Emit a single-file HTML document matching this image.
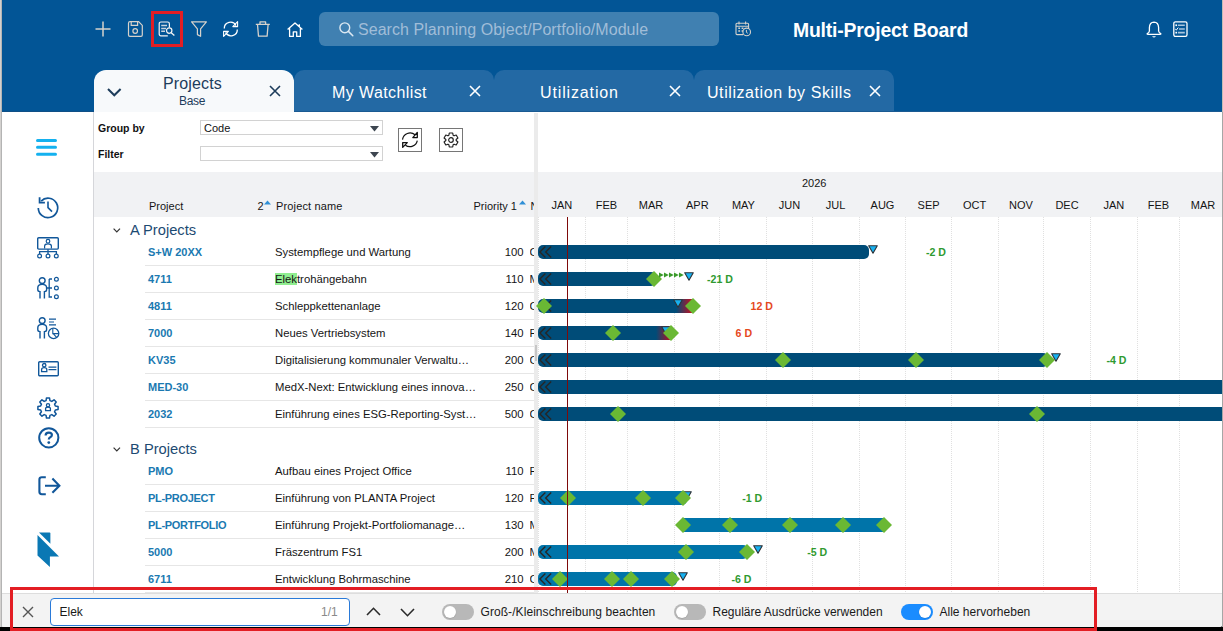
<!DOCTYPE html><html><head><meta charset="utf-8"><style>
*{box-sizing:border-box}
html,body{margin:0;padding:0}
body{width:1223px;height:631px;overflow:hidden;background:#000;font-family:"Liberation Sans", sans-serif;position:relative}
.a{position:absolute}
.t{position:absolute;white-space:nowrap;line-height:1}
svg{position:absolute;overflow:visible}
</style></head><body>
<div class="a" style="left:0;top:0;width:1223px;height:627px;background:#fff;border-radius:0 0 4px 4px;overflow:hidden">
<div class="a" style="left:0;top:0;width:1223px;height:112px;background:#025596"></div>
<div class="a" style="left:0;top:111px;width:1223px;height:1px;background:#0f4f86"></div>
<svg style="left:95px;top:21px" width="16" height="16" viewBox="0 0 16 16" ><path d="M8 0.5V15.5M0.5 8H15.5" stroke="#d6d2cc" stroke-width="1.5" fill="none"/></svg>
<svg style="left:127px;top:21px" width="16" height="16" viewBox="0 0 16 16" ><path d="M1.5 2.2Q1.5 0.7 3 0.7H11.6L15.3 4.4V14Q15.3 15.3 14 15.3H3Q1.5 15.3 1.5 14Z" stroke="#d6d2cc" stroke-width="1.2" fill="none"/><path d="M4.2 0.7V4.3H10.6V0.7" stroke="#d6d2cc" stroke-width="1.2" fill="none"/><circle cx="8.2" cy="10" r="2.3" stroke="#d6d2cc" stroke-width="1.2" fill="none"/></svg>
<div class="a" style="left:151px;top:11px;width:32px;height:36px;border:3px solid #e31e24"></div>
<svg style="left:158px;top:21px" width="18" height="16" viewBox="0 0 18 16" ><path d="M9.8 14.9H3Q1.2 14.9 1.2 13.1V2.8Q1.2 1 3 1H9.6Q11.4 1 11.4 2.8V6.4" stroke="#f4f4f4" stroke-width="1.2" fill="none"/><path d="M3.2 4.6H9M3.2 7.4H8M3.2 10.2H7" stroke="#c8d4de" stroke-width="1.5" fill="none"/><circle cx="11.2" cy="9.6" r="2.7" fill="#025596" stroke="#f4f4f4" stroke-width="1.2"/><path d="M13.2 11.8L16.4 14.6" stroke="#f4f4f4" stroke-width="1.3"/></svg>
<svg style="left:191px;top:21px" width="16" height="16" viewBox="0 0 16 16" ><path d="M0.6 0.8H15.4L9.6 7.9V15.3L6.4 13.6V7.9Z" stroke="#d6d2cc" stroke-width="1.2" fill="none" stroke-linejoin="round"/></svg>
<svg style="left:222px;top:21px" width="18" height="16" viewBox="0 0 18 16" ><path d="M2.3 7.6A6.2 6.2 0 0 1 14 4.6" stroke="#fff" stroke-width="1.3" fill="none"/><path d="M15.6 0.6V5.6H10.8Z" stroke="#fff" stroke-width="1.1" fill="none" stroke-linejoin="round"/><path d="M15.3 8.4A6.2 6.2 0 0 1 3.6 11.4" stroke="#fff" stroke-width="1.3" fill="none"/><path d="M1.6 15.4V10.4H6.4Z" stroke="#fff" stroke-width="1.1" fill="none" stroke-linejoin="round"/></svg>
<svg style="left:255px;top:21px" width="16" height="16" viewBox="0 0 16 16" ><path d="M0.8 3.3H14.8M5 3.1V0.9H10.6V3.1M2.5 3.5L3.5 15.2H12.1L13.1 3.5" stroke="#d6d2cc" stroke-width="1.3" fill="none" stroke-linejoin="round"/></svg>
<svg style="left:287px;top:22px" width="16" height="15" viewBox="0 0 16 15" ><path d="M0.6 7.6L8 0.9L15.4 7.6M2.6 6V14.4H6.3V9.8H9.7V14.4H13.4V6M12.3 2.2V4.6" stroke="#fff" stroke-width="1.3" fill="none" stroke-linejoin="round"/></svg>
<div class="a" style="left:319px;top:12px;width:400px;height:34px;border-radius:6px;background:#4080b1"></div>
<svg style="left:339px;top:22px" width="15" height="15" viewBox="0 0 15 15" ><circle cx="5.8" cy="5.8" r="4.9" stroke="#dce8f2" stroke-width="1.4" fill="none"/><path d="M9.4 9.4L13.8 13.8" stroke="#dce8f2" stroke-width="1.5" stroke-linecap="round"/></svg>
<div class="t" style="left:358px;top:22px;font-size:16px;color:#a0bdd8;letter-spacing:0.05px">Search Planning Object/Portfolio/Module</div>
<svg style="left:735px;top:21px" width="17" height="17" viewBox="0 0 17 17" ><path d="M8 13.6H2Q1 13.6 1 12.6V3.2Q1 2.2 2 2.2H12.6Q13.6 2.2 13.6 3.2V7.2M1 5.2H13.6M4 0.6V3.4M10.6 0.6V3.4" stroke="#d6d2cc" stroke-width="1.1" fill="none"/><path d="M3.3 7.3H5.1M6.6 7.3H8.4M3.3 10H5.1M6.6 10H8" stroke="#d6d2cc" stroke-width="1.4"/><circle cx="11.7" cy="10.9" r="3.8" fill="#025596" stroke="#d6d2cc" stroke-width="1.1"/><path d="M11.4 8.9V11.3L12.8 12.3" stroke="#d6d2cc" stroke-width="1" fill="none"/></svg>
<div class="t" style="left:793px;top:21px;font-size:19.4px;letter-spacing:-0.2px;font-weight:700;color:#fff">Multi-Project Board</div>
<svg style="left:1146px;top:21px" width="16" height="17" viewBox="0 0 16 17" ><path d="M8 1.2Q12.4 1.4 12.6 6.6V10Q12.8 11.6 14.8 12.6Q15 13.4 14.2 13.4H1.8Q1 13.4 1.2 12.6Q3.2 11.6 3.4 10V6.6Q3.6 1.4 8 1.2Z" stroke="#fff" stroke-width="1.3" fill="none" stroke-linejoin="round"/><path d="M6.6 15.4Q8 16.6 9.4 15.4" stroke="#fff" stroke-width="1.2" fill="none"/></svg>
<svg style="left:1173px;top:21px" width="15" height="16" viewBox="0 0 15 16" ><rect x="0.8" y="0.8" width="13.2" height="14.6" rx="1.6" stroke="#fff" stroke-width="1.3" fill="none"/><path d="M5 4.2H11.8M6 8H11.8M5 11.6H11.8" stroke="#a9c4dc" stroke-width="1.6"/><rect x="2.4" y="3.4" width="1.7" height="1.7" fill="#fff"/><rect x="2.4" y="10.8" width="1.7" height="1.7" fill="#fff"/><path d="M2.2 8L3.3 9.1L5.2 6.6" stroke="#fff" stroke-width="1" fill="none"/></svg>
<div class="a" style="left:94px;top:70px;width:200px;height:42px;background:#f7f9fb;border-radius:12px 12px 0 0"></div>
<svg style="left:107px;top:88px" width="15" height="9" viewBox="0 0 15 9" ><path d="M1 1L7.3 7.3L13.6 1" stroke="#1d3c5b" stroke-width="2" fill="none"/></svg>
<div class="t" style="left:163px;top:76px;font-size:16px;color:#1d3c5b;letter-spacing:0.15px">Projects</div>
<div class="t" style="left:179px;top:95px;font-size:12px;color:#1d3c5b;letter-spacing:-0.3px">Base</div>
<svg style="left:270.0px;top:86.0px" width="10" height="10" viewBox="0 0 10 10" ><path d="M0 0L10 10M10 0L0 10" stroke="#1d3c5b" stroke-width="1.6"/></svg>
<div class="a" style="left:294px;top:70px;width:200px;height:42px;background:#2369a4;border-radius:10px 10px 0 0"></div>
<div class="t" style="left:332px;top:85px;font-size:16px;color:#fff;letter-spacing:0.4px">My Watchlist</div>
<svg style="left:470.0px;top:86.0px" width="10" height="10" viewBox="0 0 10 10" ><path d="M0 0L10 10M10 0L0 10" stroke="#fff" stroke-width="1.6"/></svg>
<div class="a" style="left:494px;top:70px;width:200px;height:42px;background:#2369a4;border-radius:10px 10px 0 0"></div>
<div class="t" style="left:540px;top:85px;font-size:16px;color:#fff;letter-spacing:0.86px">Utilization</div>
<svg style="left:670.0px;top:86.0px" width="10" height="10" viewBox="0 0 10 10" ><path d="M0 0L10 10M10 0L0 10" stroke="#fff" stroke-width="1.6"/></svg>
<div class="a" style="left:694px;top:70px;width:200px;height:42px;background:#2369a4;border-radius:10px 10px 0 0"></div>
<div class="t" style="left:707px;top:85px;font-size:16px;color:#fff;letter-spacing:0.57px">Utilization by Skills</div>
<svg style="left:870.0px;top:86.0px" width="10" height="10" viewBox="0 0 10 10" ><path d="M0 0L10 10M10 0L0 10" stroke="#fff" stroke-width="1.6"/></svg>
<div class="a" style="left:294px;top:111px;width:929px;height:1px;background:#1a5a92"></div>
<div class="a" style="left:93px;top:112px;width:1px;height:481px;background:#d5d6da"></div>
<svg style="left:36px;top:139px" width="21" height="17" viewBox="0 0 21 17" ><path d="M1.5 1.5H19.5M1.5 8.3H19.5M1.5 15.3H19.5" stroke="#14b1ef" stroke-width="3" stroke-linecap="round"/></svg>
<svg style="left:36px;top:196px" width="24" height="24" viewBox="0 0 24 24" ><path d="M2.3 11.9A9.7 9.7 0 1 0 5.14 5.04" stroke="#11579a" stroke-width="1.7" fill="none"/><path d="M3.6 1.2V6.6H8.9" stroke="#11579a" stroke-width="1.8" fill="none"/><path d="M12 5.4V11.6L16 15.6" stroke="#11579a" stroke-width="1.6" fill="none"/></svg>
<svg style="left:37px;top:237px" width="22" height="22" viewBox="0 0 22 22" ><rect x="0.7" y="0.7" width="20.6" height="11.4" rx="1" stroke="#11579a" stroke-width="1.4" fill="none"/><circle cx="11" cy="4.2" r="1.8" stroke="#11579a" stroke-width="1.2" fill="none"/><path d="M7.6 11.6V9Q7.6 6.8 11 6.8Q14.4 6.8 14.4 9V11.6" stroke="#11579a" stroke-width="1.2" fill="none"/><path d="M11 12.2V14.6M2.6 17V14.6H19.4V17M11 14.6V17" stroke="#11579a" stroke-width="1.3" fill="none"/><circle cx="2.6" cy="19" r="1.9" stroke="#11579a" stroke-width="1.2" fill="none"/><circle cx="11" cy="19" r="1.9" stroke="#11579a" stroke-width="1.2" fill="none"/><circle cx="19.3" cy="19" r="1.9" stroke="#11579a" stroke-width="1.2" fill="none"/></svg>
<svg style="left:37px;top:277px" width="22" height="22" viewBox="0 0 22 22" ><circle cx="5.2" cy="3.6" r="2.9" stroke="#11579a" stroke-width="1.4" fill="none"/><path d="M3 21.6V14.6Q0.8 14.6 0.8 12.8V10.8Q0.8 7.4 5.2 7.4Q9.6 7.4 9.6 10.8V12.8Q9.6 14.6 7.4 14.6V21.6" stroke="#11579a" stroke-width="1.4" fill="none"/><path d="M12.2 2H15M12.2 2V20H15M9 11H15" stroke="#11579a" stroke-width="1.3" fill="none"/><circle cx="19.4" cy="2.2" r="1.9" stroke="#11579a" stroke-width="1.2" fill="none"/><circle cx="19.4" cy="11" r="1.9" stroke="#11579a" stroke-width="1.2" fill="none"/><circle cx="19.4" cy="19.8" r="1.9" stroke="#11579a" stroke-width="1.2" fill="none"/></svg>
<svg style="left:37px;top:317px" width="22" height="22" viewBox="0 0 22 22" ><circle cx="5.2" cy="3.6" r="2.9" stroke="#11579a" stroke-width="1.4" fill="none"/><path d="M3 21.6V14.6Q0.8 14.6 0.8 12.8V10.8Q0.8 7.4 5.2 7.4Q9.6 7.4 9.6 10.8V12.8Q9.6 14.6 7.4 14.6V21.6" stroke="#11579a" stroke-width="1.4" fill="none"/><path d="M12 2.2H19M12 5H17M12 7.8H19" stroke="#11579a" stroke-width="1.2" fill="none"/><circle cx="16.6" cy="16.4" r="5.2" stroke="#11579a" stroke-width="1.3" fill="none"/><path d="M15.8 11.2V16.6H21.8M16.2 16.6L19.6 20.4" stroke="#11579a" stroke-width="1.1" fill="none"/></svg>
<svg style="left:38px;top:361px" width="21" height="16" viewBox="0 0 21 16" ><rect x="0.7" y="0.7" width="19.6" height="14" rx="1" stroke="#11579a" stroke-width="1.4" fill="none"/><circle cx="6.2" cy="4.2" r="1.7" stroke="#11579a" stroke-width="1.3" fill="none"/><path d="M3.6 10.6V8.6Q3.6 6.6 6.2 6.6Q8.8 6.6 8.8 8.6V10.6Z" stroke="#11579a" stroke-width="1.3" fill="none"/><path d="M10.5 6.1H18.4M10.5 8.6H18.4" stroke="#11579a" stroke-width="1.2"/></svg>
<svg style="left:37px;top:397px" width="22" height="22" viewBox="0 0 22 22" ><path d="M18.34 9.05 L21.09 9.48 L21.09 12.52 L18.34 12.95 L17.57 14.81 L19.21 17.05 L17.05 19.21 L14.81 17.57 L12.95 18.34 L12.52 21.09 L9.48 21.09 L9.05 18.34 L7.19 17.57 L4.95 19.21 L2.79 17.05 L4.43 14.81 L3.66 12.95 L0.91 12.52 L0.91 9.48 L3.66 9.05 L4.43 7.19 L2.79 4.95 L4.95 2.79 L7.19 4.43 L9.05 3.66 L9.48 0.91 L12.52 0.91 L12.95 3.66 L14.81 4.43 L17.05 2.79 L19.21 4.95 L17.57 7.19Z" stroke="#11579a" stroke-width="1.5" fill="none" stroke-linejoin="round"/><circle cx="11" cy="8.2" r="1.6" stroke="#11579a" stroke-width="1.3" fill="none"/><path d="M8.6 13.6V11.6Q8.6 10.2 11 10.2Q13.4 10.2 13.4 11.6V13.6Z" stroke="#11579a" stroke-width="1.3" fill="none"/></svg>
<svg style="left:38px;top:427px" width="22" height="22" viewBox="0 0 22 22" ><circle cx="10.8" cy="10.8" r="9.6" stroke="#11579a" stroke-width="2" fill="none"/><path d="M7.6 8.4Q7.6 5.6 10.8 5.6Q13.9 5.6 13.9 8.1Q13.9 9.7 11.9 10.5Q10.8 11 10.8 12.6" stroke="#11579a" stroke-width="2.2" fill="none"/><circle cx="10.8" cy="15.6" r="1.4" fill="#11579a"/></svg>
<svg style="left:38px;top:476px" width="23" height="20" viewBox="0 0 23 20" ><path d="M7.8 1.2H3.8Q1.4 1.2 1.4 3.6V15.8Q1.4 18.2 3.8 18.2H7.8" stroke="#11579a" stroke-width="2.1" fill="none"/><path d="M7 9.7H21M14.4 2.6L21.4 9.7L14.4 16.8" stroke="#11579a" stroke-width="2.1" fill="none"/></svg>
<svg style="left:37px;top:532px" width="23" height="36" viewBox="0 0 23 36" ><path d="M2 0.5H12.6Q13.4 0.5 13.4 1.5V11.8Z" fill="#0a78b4"/><path d="M0.5 2.9L22 24.4H12.9V35L0.5 23.5Z" fill="#0a78b4"/></svg>
<div class="t" style="left:98px;top:123.2px;font-size:10.5px;font-weight:700;color:#111">Group by</div>
<div class="t" style="left:98px;top:149.2px;font-size:10.5px;font-weight:700;color:#111">Filter</div>
<div class="a" style="left:200px;top:120px;width:183px;height:15px;border:1px solid #d2d2d2;background:#fff"></div>
<div class="t" style="left:204px;top:123px;font-size:11px;color:#111">Code</div>
<svg style="left:370px;top:126px" width="9" height="6" viewBox="0 0 9 6" ><path d="M0 0H9L4.5 5.5Z" fill="#3d4650"/></svg>
<div class="a" style="left:200px;top:146px;width:183px;height:15px;border:1px solid #d2d2d2;background:#fff"></div>
<svg style="left:370px;top:152px" width="9" height="6" viewBox="0 0 9 6" ><path d="M0 0H9L4.5 5.5Z" fill="#3d4650"/></svg>
<div class="a" style="left:398px;top:128px;width:24px;height:24px;border:1px solid #767676;background:#fff"></div>
<div class="a" style="left:439px;top:128px;width:24px;height:24px;border:1px solid #767676;background:#fff"></div>
<svg style="left:402px;top:132px" width="16" height="16" viewBox="0 0 16 16" ><path d="M0.5 7.6A7.6 7.6 0 0 1 13 2.8" stroke="#111" stroke-width="1.2" fill="none"/><path d="M15.3 0.4V5.6H10.8Z" stroke="#111" stroke-width="1.3" fill="#fff" stroke-linejoin="round"/><path d="M15.3 8.6A7.6 7.6 0 0 1 3.4 13.2" stroke="#111" stroke-width="1.2" fill="none"/><path d="M0.7 10.6H5.3L0.7 15.4Z" stroke="#111" stroke-width="1.3" fill="#fff" stroke-linejoin="round"/></svg>
<svg style="left:443px;top:132px" width="16" height="16" viewBox="0 0 16 16" ><path d="M5.88 3.25 L6.29 1.01 L9.71 1.01 L10.12 3.25 L11.05 3.79 L13.20 3.02 L14.91 5.99 L13.17 7.46 L13.17 8.54 L14.91 10.01 L13.20 12.98 L11.05 12.21 L10.12 12.75 L9.71 14.99 L6.29 14.99 L5.88 12.75 L4.95 12.21 L2.80 12.98 L1.09 10.01 L2.83 8.54 L2.83 7.46 L1.09 5.99 L2.80 3.02 L4.95 3.79Z" stroke="#222" stroke-width="1.2" fill="none" stroke-linejoin="round"/><circle cx="8" cy="8" r="2.3" stroke="#222" stroke-width="1.2" fill="none"/></svg>
<div class="a" style="left:534px;top:113px;width:4px;height:480px;background:#ebebeb"></div>
<div class="a" style="left:94px;top:172px;width:440px;height:45px;background:#f1f2f4"></div>
<div class="a" style="left:538px;top:172px;width:685px;height:45px;background:#f1f2f4"></div>
<div class="t" style="left:149px;top:201px;font-size:11px;color:#151515">Project</div>
<div class="t" style="left:257.5px;top:201px;font-size:11px;color:#151515">2</div>
<svg style="left:264px;top:200.4px" width="7.5" height="5" viewBox="0 0 7.5 5" ><path d="M0 4.5L3.5 0.5L7 4.5Z" fill="#2f8fd6"/></svg>
<div class="t" style="left:276px;top:201px;font-size:11px;color:#151515;letter-spacing:0.15px">Project name</div>
<div class="t" style="left:473.5px;top:201px;font-size:11px;color:#151515">Priority 1</div>
<svg style="left:519px;top:200.4px" width="7.5" height="5" viewBox="0 0 7.5 5" ><path d="M0 4.5L3.5 0.5L7 4.5Z" fill="#2f8fd6"/></svg>
<div class="a" style="left:527px;top:195px;width:7px;height:20px;overflow:hidden"><div class="t" style="left:3.5px;top:6px;font-size:11px;color:#151515">N</div></div>
<div class="t" style="left:802px;top:178.4px;font-size:11px;color:#151515;width:24px;text-align:center">2026</div>
<div class="t" style="left:531.9px;top:200.3px;width:60px;text-align:center;font-size:11px;color:#151515">JAN</div>
<div class="t" style="left:576.5px;top:200.3px;width:60px;text-align:center;font-size:11px;color:#151515">FEB</div>
<div class="t" style="left:621.1px;top:200.3px;width:60px;text-align:center;font-size:11px;color:#151515">MAR</div>
<div class="t" style="left:667.3px;top:200.3px;width:60px;text-align:center;font-size:11px;color:#151515">APR</div>
<div class="t" style="left:713.4px;top:200.3px;width:60px;text-align:center;font-size:11px;color:#151515">MAY</div>
<div class="t" style="left:759.5px;top:200.3px;width:60px;text-align:center;font-size:11px;color:#151515">JUN</div>
<div class="t" style="left:805.6px;top:200.3px;width:60px;text-align:center;font-size:11px;color:#151515">JUL</div>
<div class="t" style="left:852.5px;top:200.3px;width:60px;text-align:center;font-size:11px;color:#151515">AUG</div>
<div class="t" style="left:898.6px;top:200.3px;width:60px;text-align:center;font-size:11px;color:#151515">SEP</div>
<div class="t" style="left:944.7px;top:200.3px;width:60px;text-align:center;font-size:11px;color:#151515">OCT</div>
<div class="t" style="left:990.9px;top:200.3px;width:60px;text-align:center;font-size:11px;color:#151515">NOV</div>
<div class="t" style="left:1037.0px;top:200.3px;width:60px;text-align:center;font-size:11px;color:#151515">DEC</div>
<div class="t" style="left:1083.9px;top:200.3px;width:60px;text-align:center;font-size:11px;color:#151515">JAN</div>
<div class="t" style="left:1128.5px;top:200.3px;width:60px;text-align:center;font-size:11px;color:#151515">FEB</div>
<div class="t" style="left:1173.1px;top:200.3px;width:60px;text-align:center;font-size:11px;color:#151515">MAR</div>
<div class="a" style="left:538px;top:217px;width:685px;height:376px;overflow:hidden">
<div class="a" style="left:0px;top:0;width:1px;height:376px;background:repeating-linear-gradient(to bottom,#e0e0e0 0,#e0e0e0 1px,transparent 1px,transparent 2px)"></div>
<div class="a" style="left:47px;top:0;width:1px;height:376px;background:repeating-linear-gradient(to bottom,#e0e0e0 0,#e0e0e0 1px,transparent 1px,transparent 2px)"></div>
<div class="a" style="left:89px;top:0;width:1px;height:376px;background:repeating-linear-gradient(to bottom,#e0e0e0 0,#e0e0e0 1px,transparent 1px,transparent 2px)"></div>
<div class="a" style="left:136px;top:0;width:1px;height:376px;background:repeating-linear-gradient(to bottom,#e0e0e0 0,#e0e0e0 1px,transparent 1px,transparent 2px)"></div>
<div class="a" style="left:181px;top:0;width:1px;height:376px;background:repeating-linear-gradient(to bottom,#e0e0e0 0,#e0e0e0 1px,transparent 1px,transparent 2px)"></div>
<div class="a" style="left:228px;top:0;width:1px;height:376px;background:repeating-linear-gradient(to bottom,#e0e0e0 0,#e0e0e0 1px,transparent 1px,transparent 2px)"></div>
<div class="a" style="left:274px;top:0;width:1px;height:376px;background:repeating-linear-gradient(to bottom,#e0e0e0 0,#e0e0e0 1px,transparent 1px,transparent 2px)"></div>
<div class="a" style="left:321px;top:0;width:1px;height:376px;background:repeating-linear-gradient(to bottom,#e0e0e0 0,#e0e0e0 1px,transparent 1px,transparent 2px)"></div>
<div class="a" style="left:367px;top:0;width:1px;height:376px;background:repeating-linear-gradient(to bottom,#e0e0e0 0,#e0e0e0 1px,transparent 1px,transparent 2px)"></div>
<div class="a" style="left:413px;top:0;width:1px;height:376px;background:repeating-linear-gradient(to bottom,#e0e0e0 0,#e0e0e0 1px,transparent 1px,transparent 2px)"></div>
<div class="a" style="left:460px;top:0;width:1px;height:376px;background:repeating-linear-gradient(to bottom,#e0e0e0 0,#e0e0e0 1px,transparent 1px,transparent 2px)"></div>
<div class="a" style="left:505px;top:0;width:1px;height:376px;background:repeating-linear-gradient(to bottom,#e0e0e0 0,#e0e0e0 1px,transparent 1px,transparent 2px)"></div>
<div class="a" style="left:552px;top:0;width:1px;height:376px;background:repeating-linear-gradient(to bottom,#e0e0e0 0,#e0e0e0 1px,transparent 1px,transparent 2px)"></div>
<div class="a" style="left:599px;top:0;width:1px;height:376px;background:repeating-linear-gradient(to bottom,#e0e0e0 0,#e0e0e0 1px,transparent 1px,transparent 2px)"></div>
<div class="a" style="left:641px;top:0;width:1px;height:376px;background:repeating-linear-gradient(to bottom,#e0e0e0 0,#e0e0e0 1px,transparent 1px,transparent 2px)"></div>
<div class="a" style="left:688px;top:0;width:1px;height:376px;background:repeating-linear-gradient(to bottom,#e0e0e0 0,#e0e0e0 1px,transparent 1px,transparent 2px)"></div>
</div>
<svg style="left:113px;top:228px" width="8" height="5" viewBox="0 0 8 5" ><path d="M0.6 0.6L3.8 3.8L7 0.6" stroke="#333" stroke-width="1.2" fill="none"/></svg>
<div class="t" style="left:130px;top:223px;font-size:14.7px;color:#1c4a72">A Projects</div>
<div class="t" style="left:148px;top:247px;font-size:11px;font-weight:700;color:#1a79b1;letter-spacing:0">S+W 20XX</div>
<div class="t" style="left:275px;top:247px;font-size:11.3px;color:#151515">Systempflege und Wartung</div>
<div class="t" style="left:480px;top:247px;width:43.5px;text-align:right;font-size:11.3px;color:#151515">100</div>
<div class="a" style="left:529.5px;top:244px;width:4.5px;height:16px;overflow:hidden"><div class="t" style="left:0;top:3px;font-size:11.3px;color:#151515">C</div></div>
<div class="a" style="left:145px;top:265px;width:389px;height:1px;background:#e6e6e6"></div>
<div class="t" style="left:148px;top:274px;font-size:11px;font-weight:700;color:#1a79b1;letter-spacing:0">4711</div>
<div class="t" style="left:275px;top:274px;font-size:11.3px;color:#151515"><span style="background:#90ee90">Elek</span>trohängebahn</div>
<div class="t" style="left:480px;top:274px;width:43.5px;text-align:right;font-size:11.3px;color:#151515">110</div>
<div class="a" style="left:529.5px;top:271px;width:4.5px;height:16px;overflow:hidden"><div class="t" style="left:0;top:3px;font-size:11.3px;color:#151515">M</div></div>
<div class="a" style="left:145px;top:292px;width:389px;height:1px;background:#e6e6e6"></div>
<div class="t" style="left:148px;top:301px;font-size:11px;font-weight:700;color:#1a79b1;letter-spacing:0">4811</div>
<div class="t" style="left:275px;top:301px;font-size:11.3px;color:#151515">Schleppkettenanlage</div>
<div class="t" style="left:480px;top:301px;width:43.5px;text-align:right;font-size:11.3px;color:#151515">120</div>
<div class="a" style="left:529.5px;top:298px;width:4.5px;height:16px;overflow:hidden"><div class="t" style="left:0;top:3px;font-size:11.3px;color:#151515">C</div></div>
<div class="a" style="left:145px;top:319px;width:389px;height:1px;background:#e6e6e6"></div>
<div class="t" style="left:148px;top:328px;font-size:11px;font-weight:700;color:#1a79b1;letter-spacing:0">7000</div>
<div class="t" style="left:275px;top:328px;font-size:11.3px;color:#151515">Neues Vertriebsystem</div>
<div class="t" style="left:480px;top:328px;width:43.5px;text-align:right;font-size:11.3px;color:#151515">140</div>
<div class="a" style="left:529.5px;top:325px;width:4.5px;height:16px;overflow:hidden"><div class="t" style="left:0;top:3px;font-size:11.3px;color:#151515">F</div></div>
<div class="a" style="left:145px;top:346px;width:389px;height:1px;background:#e6e6e6"></div>
<div class="t" style="left:148px;top:355px;font-size:11px;font-weight:700;color:#1a79b1;letter-spacing:0">KV35</div>
<div class="t" style="left:275px;top:355px;font-size:11.3px;color:#151515">Digitalisierung kommunaler Verwaltu…</div>
<div class="t" style="left:480px;top:355px;width:43.5px;text-align:right;font-size:11.3px;color:#151515">200</div>
<div class="a" style="left:529.5px;top:352px;width:4.5px;height:16px;overflow:hidden"><div class="t" style="left:0;top:3px;font-size:11.3px;color:#151515">C</div></div>
<div class="a" style="left:145px;top:373px;width:389px;height:1px;background:#e6e6e6"></div>
<div class="t" style="left:148px;top:382px;font-size:11px;font-weight:700;color:#1a79b1;letter-spacing:0">MED-30</div>
<div class="t" style="left:275px;top:382px;font-size:11.3px;color:#151515">MedX-Next: Entwicklung eines innova…</div>
<div class="t" style="left:480px;top:382px;width:43.5px;text-align:right;font-size:11.3px;color:#151515">250</div>
<div class="a" style="left:529.5px;top:379px;width:4.5px;height:16px;overflow:hidden"><div class="t" style="left:0;top:3px;font-size:11.3px;color:#151515">C</div></div>
<div class="a" style="left:145px;top:400px;width:389px;height:1px;background:#e6e6e6"></div>
<div class="t" style="left:148px;top:409px;font-size:11px;font-weight:700;color:#1a79b1;letter-spacing:0">2032</div>
<div class="t" style="left:275px;top:409px;font-size:11.3px;color:#151515">Einführung eines ESG-Reporting-Syst…</div>
<div class="t" style="left:480px;top:409px;width:43.5px;text-align:right;font-size:11.3px;color:#151515">500</div>
<div class="a" style="left:529.5px;top:406px;width:4.5px;height:16px;overflow:hidden"><div class="t" style="left:0;top:3px;font-size:11.3px;color:#151515">C</div></div>
<div class="a" style="left:145px;top:427px;width:389px;height:1px;background:#e6e6e6"></div>
<svg style="left:113px;top:447px" width="8" height="5" viewBox="0 0 8 5" ><path d="M0.6 0.6L3.8 3.8L7 0.6" stroke="#333" stroke-width="1.2" fill="none"/></svg>
<div class="t" style="left:130px;top:442px;font-size:14.7px;color:#1c4a72">B Projects</div>
<div class="t" style="left:148px;top:466px;font-size:11px;font-weight:700;color:#1a79b1;letter-spacing:0">PMO</div>
<div class="t" style="left:275px;top:466px;font-size:11.3px;color:#151515">Aufbau eines Project Office</div>
<div class="t" style="left:480px;top:466px;width:43.5px;text-align:right;font-size:11.3px;color:#151515">110</div>
<div class="a" style="left:529.5px;top:463px;width:4.5px;height:16px;overflow:hidden"><div class="t" style="left:0;top:3px;font-size:11.3px;color:#151515">F</div></div>
<div class="a" style="left:145px;top:484px;width:389px;height:1px;background:#e6e6e6"></div>
<div class="t" style="left:148px;top:493px;font-size:11px;font-weight:700;color:#1a79b1;letter-spacing:-0.3px">PL-PROJECT</div>
<div class="t" style="left:275px;top:493px;font-size:11.3px;color:#151515">Einführung von PLANTA Project</div>
<div class="t" style="left:480px;top:493px;width:43.5px;text-align:right;font-size:11.3px;color:#151515">120</div>
<div class="a" style="left:529.5px;top:490px;width:4.5px;height:16px;overflow:hidden"><div class="t" style="left:0;top:3px;font-size:11.3px;color:#151515">F</div></div>
<div class="a" style="left:145px;top:511px;width:389px;height:1px;background:#e6e6e6"></div>
<div class="t" style="left:148px;top:520px;font-size:11px;font-weight:700;color:#1a79b1;letter-spacing:-0.3px">PL-PORTFOLIO</div>
<div class="t" style="left:275px;top:520px;font-size:11.3px;color:#151515">Einführung Projekt-Portfoliomanage…</div>
<div class="t" style="left:480px;top:520px;width:43.5px;text-align:right;font-size:11.3px;color:#151515">130</div>
<div class="a" style="left:529.5px;top:517px;width:4.5px;height:16px;overflow:hidden"><div class="t" style="left:0;top:3px;font-size:11.3px;color:#151515">M</div></div>
<div class="a" style="left:145px;top:538px;width:389px;height:1px;background:#e6e6e6"></div>
<div class="t" style="left:148px;top:547px;font-size:11px;font-weight:700;color:#1a79b1;letter-spacing:0">5000</div>
<div class="t" style="left:275px;top:547px;font-size:11.3px;color:#151515">Fräszentrum FS1</div>
<div class="t" style="left:480px;top:547px;width:43.5px;text-align:right;font-size:11.3px;color:#151515">200</div>
<div class="a" style="left:529.5px;top:544px;width:4.5px;height:16px;overflow:hidden"><div class="t" style="left:0;top:3px;font-size:11.3px;color:#151515">M</div></div>
<div class="a" style="left:145px;top:565px;width:389px;height:1px;background:#e6e6e6"></div>
<div class="t" style="left:148px;top:574px;font-size:11px;font-weight:700;color:#1a79b1;letter-spacing:0">6711</div>
<div class="t" style="left:275px;top:574px;font-size:11.3px;color:#151515">Entwicklung Bohrmaschine</div>
<div class="t" style="left:480px;top:574px;width:43.5px;text-align:right;font-size:11.3px;color:#151515">210</div>
<div class="a" style="left:529.5px;top:571px;width:4.5px;height:16px;overflow:hidden"><div class="t" style="left:0;top:3px;font-size:11.3px;color:#151515">C</div></div>
<div class="a" style="left:145px;top:592px;width:389px;height:1px;background:#e6e6e6"></div>
<div class="a" style="left:538px;top:245px;width:331px;height:14px;background:#004c78;border-radius:5px 5px 5px 5px"></div>
<svg style="left:539px;top:246px" width="13" height="12" viewBox="0 0 13 12" ><path d="M6.4 0.6L0.9 6L6.4 11.4M12.2 0.6L6.7 6L12.2 11.4" stroke="#262626" stroke-width="1.4" fill="none"/></svg>
<svg style="left:868px;top:244.8px" width="10" height="9" viewBox="0 0 10 9" ><path d="M0.7 0.7H9.3L5 8.2Z" fill="#17b1f0" stroke="#2e3338" stroke-width="1.1" stroke-linejoin="round"/></svg>
<div class="t" style="left:926px;top:246.5px;font-size:10.6px;font-weight:700;color:#2f9a30">-2 D</div>
<div class="a" style="left:538px;top:272px;width:118px;height:14px;background:#004c78;border-radius:5px 5px 5px 5px"></div>
<svg style="left:539px;top:273px" width="13" height="12" viewBox="0 0 13 12" ><path d="M6.4 0.6L0.9 6L6.4 11.4M12.2 0.6L6.7 6L12.2 11.4" stroke="#262626" stroke-width="1.4" fill="none"/></svg>
<svg style="left:646px;top:271px" width="16" height="16" viewBox="0 0 16 16" ><path d="M8 0L16 8L8 16L0 8Z" fill="#6ab834"/></svg>
<svg style="left:659px;top:272px" width="26" height="8" viewBox="0 0 26 8" ><path d="M0 0.4L4.8 3L0 5.6Z" fill="#3a9a2a"/><path d="M5 0.4L9.8 3L5 5.6Z" fill="#3a9a2a"/><path d="M10 0.4L14.8 3L10 5.6Z" fill="#3a9a2a"/><path d="M15 0.4L19.8 3L15 5.6Z" fill="#3a9a2a"/><path d="M20 0.4L24.8 3L20 5.6Z" fill="#3a9a2a"/></svg>
<svg style="left:684px;top:272px" width="10" height="9" viewBox="0 0 10 9" ><path d="M0.7 0.7H9.3L5 8.2Z" fill="#17b1f0" stroke="#2e3338" stroke-width="1.1" stroke-linejoin="round"/></svg>
<div class="t" style="left:707px;top:273.5px;font-size:10.6px;font-weight:700;color:#2f9a30">-21 D</div>
<div class="a" style="left:538px;top:299px;width:154px;height:14px;border-radius:5px 0 0 5px;background:linear-gradient(to right,#004c78 0px,#004c78 138px,#c01020 154px)"></div>
<svg style="left:539px;top:300px" width="13" height="12" viewBox="0 0 13 12" ><path d="M6.4 0.6L0.9 6L6.4 11.4M12.2 0.6L6.7 6L12.2 11.4" stroke="#262626" stroke-width="1.4" fill="none"/></svg>
<svg style="left:535.6px;top:298px" width="16" height="16" viewBox="0 0 16 16" ><path d="M8 0L16 8L8 16L0 8Z" fill="#6ab834"/></svg>
<svg style="left:673px;top:299px" width="10" height="9" viewBox="0 0 10 9" ><path d="M0.7 0.7H9.3L5 8.2Z" fill="#17b1f0" stroke="#2e3338" stroke-width="1.1" stroke-linejoin="round"/></svg>
<svg style="left:685px;top:298px" width="16" height="16" viewBox="0 0 16 16" ><path d="M8 0L16 8L8 16L0 8Z" fill="#6ab834"/></svg>
<div class="t" style="left:750.6px;top:300.5px;font-size:10.6px;font-weight:700;color:#e5481d">12 D</div>
<div class="a" style="left:538px;top:326px;width:132px;height:14px;border-radius:5px 0 0 5px;background:linear-gradient(to right,#004c78 0px,#004c78 118px,#b01020 132px)"></div>
<svg style="left:539px;top:327px" width="13" height="12" viewBox="0 0 13 12" ><path d="M6.4 0.6L0.9 6L6.4 11.4M12.2 0.6L6.7 6L12.2 11.4" stroke="#262626" stroke-width="1.4" fill="none"/></svg>
<svg style="left:605.3px;top:325px" width="16" height="16" viewBox="0 0 16 16" ><path d="M8 0L16 8L8 16L0 8Z" fill="#6ab834"/></svg>
<svg style="left:661px;top:326px" width="10" height="9" viewBox="0 0 10 9" ><path d="M0.7 0.7H9.3L5 8.2Z" fill="#17b1f0" stroke="#2e3338" stroke-width="1.1" stroke-linejoin="round"/></svg>
<svg style="left:663.2px;top:325px" width="16" height="16" viewBox="0 0 16 16" ><path d="M8 0L16 8L8 16L0 8Z" fill="#6ab834"/></svg>
<div class="t" style="left:735.6px;top:327.5px;font-size:10.6px;font-weight:700;color:#e5481d">6 D</div>
<div class="a" style="left:538px;top:353px;width:510px;height:14px;background:#004c78;border-radius:5px 5px 5px 5px"></div>
<svg style="left:539px;top:354px" width="13" height="12" viewBox="0 0 13 12" ><path d="M6.4 0.6L0.9 6L6.4 11.4M12.2 0.6L6.7 6L12.2 11.4" stroke="#262626" stroke-width="1.4" fill="none"/></svg>
<svg style="left:775.3px;top:352px" width="16" height="16" viewBox="0 0 16 16" ><path d="M8 0L16 8L8 16L0 8Z" fill="#6ab834"/></svg>
<svg style="left:908px;top:352px" width="16" height="16" viewBox="0 0 16 16" ><path d="M8 0L16 8L8 16L0 8Z" fill="#6ab834"/></svg>
<svg style="left:1039.4px;top:352px" width="16" height="16" viewBox="0 0 16 16" ><path d="M8 0L16 8L8 16L0 8Z" fill="#6ab834"/></svg>
<svg style="left:1050.5px;top:352.5px" width="10" height="9" viewBox="0 0 10 9" ><path d="M0.7 0.7H9.3L5 8.2Z" fill="#17b1f0" stroke="#2e3338" stroke-width="1.1" stroke-linejoin="round"/></svg>
<div class="t" style="left:1106.5px;top:354.5px;font-size:10.6px;font-weight:700;color:#2f9a30">-4 D</div>
<div class="a" style="left:538px;top:380px;width:702px;height:14px;background:#004c78;border-radius:5px 0px 0px 5px"></div>
<svg style="left:539px;top:381px" width="13" height="12" viewBox="0 0 13 12" ><path d="M6.4 0.6L0.9 6L6.4 11.4M12.2 0.6L6.7 6L12.2 11.4" stroke="#262626" stroke-width="1.4" fill="none"/></svg>
<div class="a" style="left:538px;top:407px;width:702px;height:14px;background:#004c78;border-radius:5px 0px 0px 5px"></div>
<svg style="left:539px;top:408px" width="13" height="12" viewBox="0 0 13 12" ><path d="M6.4 0.6L0.9 6L6.4 11.4M12.2 0.6L6.7 6L12.2 11.4" stroke="#262626" stroke-width="1.4" fill="none"/></svg>
<svg style="left:610px;top:406px" width="16" height="16" viewBox="0 0 16 16" ><path d="M8 0L16 8L8 16L0 8Z" fill="#6ab834"/></svg>
<svg style="left:1029.2px;top:406px" width="16" height="16" viewBox="0 0 16 16" ><path d="M8 0L16 8L8 16L0 8Z" fill="#6ab834"/></svg>
<div class="a" style="left:538px;top:491px;width:149px;height:14px;background:#0074a9;border-radius:5px 5px 5px 5px"></div>
<svg style="left:539px;top:492px" width="13" height="12" viewBox="0 0 13 12" ><path d="M6.4 0.6L0.9 6L6.4 11.4M12.2 0.6L6.7 6L12.2 11.4" stroke="#262626" stroke-width="1.4" fill="none"/></svg>
<svg style="left:682px;top:490.5px" width="10" height="9" viewBox="0 0 10 9" ><path d="M0.7 0.7H9.3L5 8.2Z" fill="#17b1f0" stroke="#2e3338" stroke-width="1.1" stroke-linejoin="round"/></svg>
<svg style="left:560px;top:490px" width="16" height="16" viewBox="0 0 16 16" ><path d="M8 0L16 8L8 16L0 8Z" fill="#6ab834"/></svg>
<svg style="left:634.5px;top:490px" width="16" height="16" viewBox="0 0 16 16" ><path d="M8 0L16 8L8 16L0 8Z" fill="#6ab834"/></svg>
<svg style="left:675.4px;top:490px" width="16" height="16" viewBox="0 0 16 16" ><path d="M8 0L16 8L8 16L0 8Z" fill="#6ab834"/></svg>
<div class="t" style="left:742.2px;top:492.5px;font-size:10.6px;font-weight:700;color:#2f9a30">-1 D</div>
<div class="a" style="left:683px;top:518px;width:202px;height:14px;background:#0074a9;border-radius:0px 0px 0px 0px"></div>
<svg style="left:675.4px;top:517px" width="16" height="16" viewBox="0 0 16 16" ><path d="M8 0L16 8L8 16L0 8Z" fill="#6ab834"/></svg>
<svg style="left:722px;top:517px" width="16" height="16" viewBox="0 0 16 16" ><path d="M8 0L16 8L8 16L0 8Z" fill="#6ab834"/></svg>
<svg style="left:782.3px;top:517px" width="16" height="16" viewBox="0 0 16 16" ><path d="M8 0L16 8L8 16L0 8Z" fill="#6ab834"/></svg>
<svg style="left:835.3px;top:517px" width="16" height="16" viewBox="0 0 16 16" ><path d="M8 0L16 8L8 16L0 8Z" fill="#6ab834"/></svg>
<svg style="left:876.3px;top:517px" width="16" height="16" viewBox="0 0 16 16" ><path d="M8 0L16 8L8 16L0 8Z" fill="#6ab834"/></svg>
<div class="a" style="left:538px;top:545px;width:210px;height:14px;background:#0074a9;border-radius:5px 5px 5px 5px"></div>
<svg style="left:539px;top:546px" width="13" height="12" viewBox="0 0 13 12" ><path d="M6.4 0.6L0.9 6L6.4 11.4M12.2 0.6L6.7 6L12.2 11.4" stroke="#262626" stroke-width="1.4" fill="none"/></svg>
<svg style="left:678.4px;top:544px" width="16" height="16" viewBox="0 0 16 16" ><path d="M8 0L16 8L8 16L0 8Z" fill="#6ab834"/></svg>
<svg style="left:739.4px;top:544px" width="16" height="16" viewBox="0 0 16 16" ><path d="M8 0L16 8L8 16L0 8Z" fill="#6ab834"/></svg>
<svg style="left:753px;top:544.6px" width="10" height="9" viewBox="0 0 10 9" ><path d="M0.7 0.7H9.3L5 8.2Z" fill="#17b1f0" stroke="#2e3338" stroke-width="1.1" stroke-linejoin="round"/></svg>
<div class="t" style="left:807.2px;top:546.5px;font-size:10.6px;font-weight:700;color:#2f9a30">-5 D</div>
<div class="a" style="left:538px;top:572px;width:139px;height:14px;background:#0074a9;border-radius:5px 5px 5px 5px"></div>
<svg style="left:539px;top:573px" width="13" height="12" viewBox="0 0 13 12" ><path d="M6.4 0.6L0.9 6L6.4 11.4M12.2 0.6L6.7 6L12.2 11.4" stroke="#262626" stroke-width="1.4" fill="none"/></svg>
<svg style="left:552px;top:571px" width="16" height="16" viewBox="0 0 16 16" ><path d="M8 0L16 8L8 16L0 8Z" fill="#6ab834"/></svg>
<svg style="left:604.3px;top:571px" width="16" height="16" viewBox="0 0 16 16" ><path d="M8 0L16 8L8 16L0 8Z" fill="#6ab834"/></svg>
<svg style="left:623.1px;top:571px" width="16" height="16" viewBox="0 0 16 16" ><path d="M8 0L16 8L8 16L0 8Z" fill="#6ab834"/></svg>
<svg style="left:664.1px;top:571px" width="16" height="16" viewBox="0 0 16 16" ><path d="M8 0L16 8L8 16L0 8Z" fill="#6ab834"/></svg>
<svg style="left:678px;top:571.6px" width="10" height="9" viewBox="0 0 10 9" ><path d="M0.7 0.7H9.3L5 8.2Z" fill="#17b1f0" stroke="#2e3338" stroke-width="1.1" stroke-linejoin="round"/></svg>
<div class="t" style="left:731.4px;top:573.5px;font-size:10.6px;font-weight:700;color:#2f9a30">-6 D</div>
<div class="a" style="left:535px;top:345px;width:2px;height:16px;background:#c6c6c6"></div>
<div class="a" style="left:567px;top:217px;width:1px;height:376px;background:#7e0a0a"></div>
<div class="a" style="left:0;top:593px;width:1223px;height:34px;background:#f3f3f3;border-top:1px solid #dddddd"></div>
<svg style="left:23.0px;top:607.0px" width="10" height="10" viewBox="0 0 10 10" ><path d="M0 0L10 10M10 0L0 10" stroke="#555" stroke-width="1.4"/></svg>
<div class="a" style="left:50px;top:598px;width:300px;height:28px;border:1.5px solid #2a7ad8;border-radius:4px;background:#fff"></div>
<div class="t" style="left:59.5px;top:606px;font-size:12px;color:#1a1a1a">Elek</div>
<div class="t" style="left:321px;top:606px;font-size:12px;color:#8a8a8a">1/1</div>
<svg style="left:366px;top:607px" width="16" height="9" viewBox="0 0 16 9" ><path d="M1 8L7.5 1.3L14 8" stroke="#2a2a2a" stroke-width="1.6" fill="none"/></svg>
<svg style="left:400px;top:608px" width="16" height="9" viewBox="0 0 16 9" ><path d="M1 1L7.5 7.7L14 1" stroke="#2a2a2a" stroke-width="1.6" fill="none"/></svg>
<div class="a" style="left:442px;top:604px;width:32px;height:16px;border-radius:8px;background:#b8b8b8"></div>
<div class="a" style="left:444px;top:606px;width:12px;height:12px;border-radius:6px;background:#fff;box-shadow:0 0.5px 1px rgba(0,0,0,0.2)"></div>
<div class="t" style="left:480.5px;top:606px;font-size:12px;color:#1a1a1a;letter-spacing:0.07px">Groß-/Kleinschreibung beachten</div>
<div class="a" style="left:674px;top:604px;width:32px;height:16px;border-radius:8px;background:#b8b8b8"></div>
<div class="a" style="left:676px;top:606px;width:12px;height:12px;border-radius:6px;background:#fff;box-shadow:0 0.5px 1px rgba(0,0,0,0.2)"></div>
<div class="t" style="left:712.5px;top:606px;font-size:12px;color:#1a1a1a">Reguläre Ausdrücke verwenden</div>
<div class="a" style="left:901px;top:604px;width:32px;height:16px;border-radius:8px;background:#1a8cff"></div>
<div class="a" style="left:919px;top:606px;width:12px;height:12px;border-radius:6px;background:#fff;box-shadow:0 0.5px 1px rgba(0,0,0,0.2)"></div>
<div class="t" style="left:939.5px;top:606px;font-size:12px;color:#1a1a1a">Alle hervorheben</div>
</div>
<div class="a" style="left:0;top:0;width:1px;height:627px;background:#d3d1cf"></div>
<div class="a" style="left:1px;top:0;width:1px;height:627px;background:#b4b4b4"></div>
<div class="a" style="left:1222px;top:0;width:1px;height:112px;background:#c4bcb4"></div>
<div class="a" style="left:1222px;top:112px;width:1px;height:515px;background:#a6a6a6"></div>
<div class="a" style="left:10px;top:587px;width:1087px;height:44px;border:3px solid #e31e24"></div>
</body></html>
